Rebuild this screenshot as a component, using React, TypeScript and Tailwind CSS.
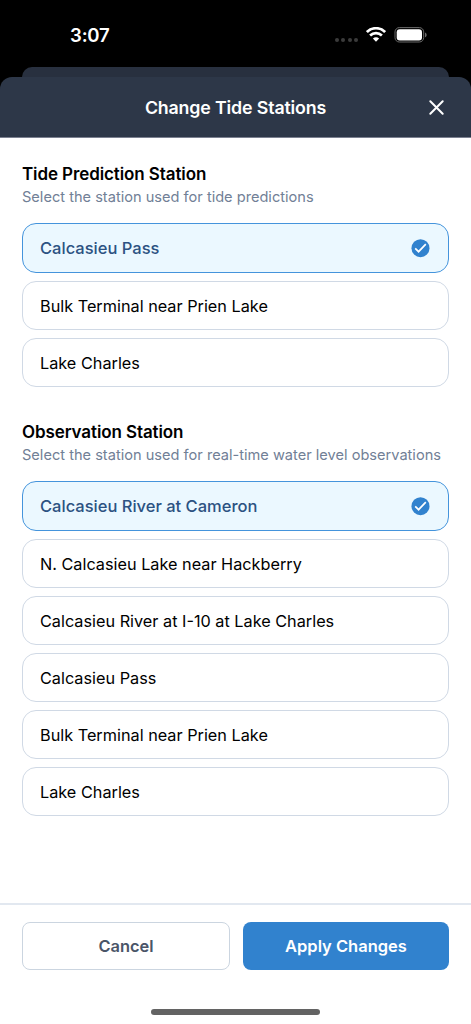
import React from "react";

type Station = { name: string };

const predictionStations: Station[] = [
  { name: "Calcasieu Pass" },
  { name: "Bulk Terminal near Prien Lake" },
  { name: "Lake Charles" },
];

const observationStations: Station[] = [
  { name: "Calcasieu River at Cameron" },
  { name: "N. Calcasieu Lake near Hackberry" },
  { name: "Calcasieu River at I-10 at Lake Charles" },
  { name: "Calcasieu Pass" },
  { name: "Bulk Terminal near Prien Lake" },
  { name: "Lake Charles" },
];

function StatusBar() {
  return (
    <div className="flex h-[67px] shrink-0 justify-between pl-[70px] pr-[43px]">
      <span className="mt-[23px] text-[18.6px] font-semibold leading-6 tracking-[-0.2px] text-white">3:07</span>
      <div className="mt-[27px] flex h-4 items-start">
        <div className="mt-[11px] mr-px flex gap-[2.4px]">
          <span className="size-1 rounded-full bg-[#3b3b3b]" />
          <span className="size-1 rounded-full bg-[#3b3b3b]" />
          <span className="size-1 rounded-full bg-[#3b3b3b]" />
          <span className="size-1 rounded-full bg-[#3b3b3b]" />
        </div>
        <svg className="ml-[7px] h-[15px] w-5" viewBox="0 0 20 15" fill="none" stroke="white" strokeWidth="2.7">
          <path d="M.9 5.1C6-.1 14-.1 19.1 5.1" />
          <path d="M4.1 8.5C7.5 5.3 12.5 5.3 15.9 8.5" />
          <path d="M6.9 11.5C8.7 9.9 11.3 9.9 13.1 11.5L10 14.7Z" fill="white" stroke="none" />
        </svg>
        <svg className="ml-2 h-4 w-[34px]" viewBox="0 0 34 16" fill="none">
          <rect x="1" y=".6" width="28.7" height="14.4" rx="4.3" stroke="#6b6b6b" />
          <rect x="2.7" y="2.2" width="25.3" height="11.2" rx="3" fill="white" />
          <path d="M31 5.4C33.2 6.1 33.2 9.5 31 10.2Z" fill="#6b6b6b" />
        </svg>
      </div>
    </div>
  );
}

function StationOption({ station, selected }: { station: Station; selected: boolean }) {
  return (
    <button
      className={
        selected
          ? "flex h-[50px] w-full items-center justify-between rounded-[14px] border border-[#4494dc] bg-[#ebf8ff] pl-[17px] pr-[18px] text-[#2c5282]"
          : "flex h-[49px] w-full items-center rounded-[14px] border border-[#d0d9e5] bg-white pl-[17px] text-black"
      }
    >
      <span className={selected ? "text-[16.5px] font-medium leading-6" : "text-[16.25px] leading-6"}>
        {station.name}
      </span>
      {selected && (
        <svg className="size-[19px]" viewBox="0 0 19 19" fill="none">
          <circle cx="9.5" cy="9.2" r="9" fill="#3182ce" />
          <path d="M4.2 9.3L7.6 12.7L14.8 5.2" stroke="white" strokeWidth="1.7" />
        </svg>
      )}
    </button>
  );
}

function StationSection({ title, description, stations }: { title: string; description: string; stations: Station[] }) {
  return (
    <section>
      <h2 className="text-[17px] font-semibold leading-6 tracking-[-0.1px] text-black">{title}</h2>
      <p className="whitespace-nowrap text-[14.6px] leading-[22px] text-[#718096]">{description}</p>
      <div className="mt-[15px] flex flex-col gap-2">
        {stations.map((station, index) => (
          <StationOption key={station.name} station={station} selected={index === 0} />
        ))}
      </div>
    </section>
  );
}

export default function App() {
  return (
    <div className="flex h-[1024px] w-[471px] flex-col overflow-hidden bg-black font-['Inter',sans-serif]">
      <StatusBar />
      <div className="mx-[22px] h-[10px] shrink-0 rounded-t-[10px] bg-[#28303f]" />
      <div className="flex min-h-0 flex-1 flex-col">
        <header className="grid h-[61px] shrink-0 grid-cols-[60px_1fr_60px] items-center rounded-t-[12px] border-b border-[#7b8090] bg-[#2d3748]">
          <h1 className="col-start-2 pt-[2px] text-center text-[17.8px] font-semibold tracking-[-0.15px] text-white">Change Tide Stations</h1>
          <button aria-label="Close" className="ml-[17px] size-[17px]">
            <svg className="size-[17px]" viewBox="0 0 17 17" stroke="white" strokeWidth="2" strokeLinecap="round">
              <path d="M2.3 2.3L14.7 14.7M14.7 2.3L2.3 14.7" />
            </svg>
          </button>
        </header>
        <main className="flex flex-1 flex-col gap-[33px] bg-white px-[22px] pt-6">
          <StationSection title="Tide Prediction Station" description="Select the station used for tide predictions" stations={predictionStations} />
          <StationSection title="Observation Station" description="Select the station used for real-time water level observations" stations={observationStations} />
        </main>
        <footer className="flex h-[121px] shrink-0 flex-col items-center border-t-2 border-[#e2e8f0] bg-white px-[22px] pt-[17px]">
          <div className="flex w-full gap-[13px]">
            <button className="h-[48px] w-[208px] rounded-[8px] border border-[#cbd5e0] pt-px text-[16.4px] font-semibold text-[#4a5568]">Cancel</button>
            <button className="h-[48px] flex-1 rounded-[8px] bg-[#3182ce] pt-px text-[16.5px] font-semibold text-white">Apply Changes</button>
          </div>
          <div className="mt-[39px] h-[6px] w-[169px] shrink-0 rounded-full bg-[#636363]" />
        </footer>
      </div>
    </div>
  );
}
